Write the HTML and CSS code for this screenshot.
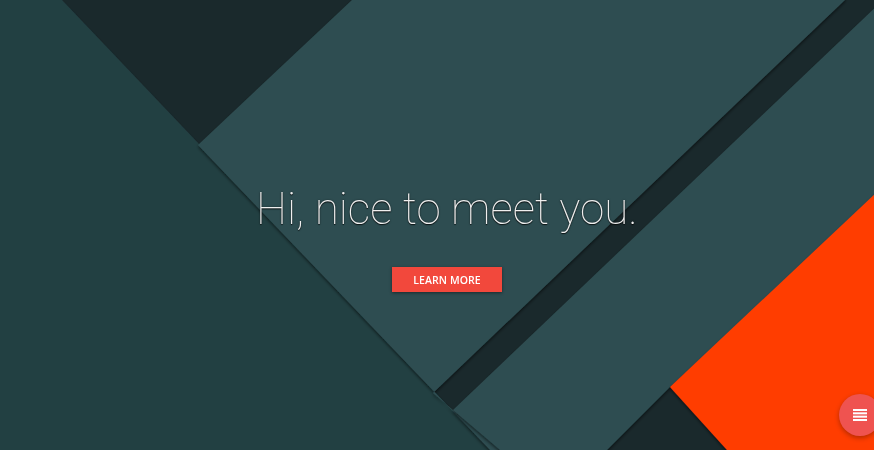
FILE: index.html
```html
<!DOCTYPE html>
<html lang="en">
<head>
<meta charset="utf-8">
<title>Hi, nice to meet you.</title>
<link rel="stylesheet" href="styles.css">
</head>
<body>
<section class="hero">
  <svg class="hero-bg" viewBox="0 0 874 450" preserveAspectRatio="none" aria-hidden="true">
    <defs>
      <filter id="sh" x="-20%" y="-20%" width="140%" height="140%">
        <feDropShadow dx="0" dy="2" stdDeviation="1.8" flood-color="#000" flood-opacity="0.5"/>
      </filter>
    </defs>
    <rect x="0" y="0" width="874" height="450" fill="#1a292c"/>
    <polygon filter="url(#sh)" fill="#243f43" points="-20,-20 62,0 490,450 -20,470"/>
    <polygon filter="url(#sh)" fill="#2f4d51" points="198,145 352,0 352,-20 845,-20 845,0 433,393 453,410 500,450 490,450"/>
    <polygon filter="url(#sh)" fill="#2f4d51" points="883,-20 883,0 453,410 500,450 500,470 607,470 607,450 670,387 894,180 894,-20"/>
    <polygon filter="url(#sh)" fill="#ff3d00" points="894,176 670,387 727,450 737,470 894,470"/>
  </svg>

  <div class="hero-content">
    <h1 class="hero-title">Hi, nice to meet you.</h1>
    <a class="btn" href="#">LEARN MORE</a>
  </div>

  <button class="fab" type="button" aria-label="Menu">
    <svg width="14" height="12" viewBox="0 0 14 12" aria-hidden="true">
      <rect x="0" y="0" width="14" height="2" fill="#fff"/>
      <rect x="0" y="3.33" width="14" height="2" fill="#fff"/>
      <rect x="0" y="6.66" width="14" height="2" fill="#fff"/>
      <rect x="0" y="10" width="14" height="2" fill="#fff"/>
    </svg>
  </button>
</section>
</body>
</html>
```

FILE: styles.css
```css
html, body {
  margin: 0;
  padding: 0;
  background: #1a292c;
}

body {
  font-family: Roboto, "Liberation Sans", sans-serif;
  overflow: hidden;
  -webkit-font-smoothing: antialiased;
}

.hero {
  position: relative;
  width: 100%;
  height: 450px;
  overflow: hidden;
}

.hero-bg {
  position: absolute;
  inset: 0;
  width: 100%;
  height: 100%;
  display: block;
}

.hero-content {
  position: relative;
  display: flex;
  flex-direction: column;
  align-items: center;
  padding-top: 183px;
  padding-left: 20px;
}

.hero-title {
  margin: 0;
  font-family: Roboto, "Liberation Sans", sans-serif;
  font-weight: 100;
  font-size: 44px;
  line-height: 52px;
  color: #efefef;
  text-shadow: 0 1px 1px rgba(0, 0, 0, 0.75), 0 0 2px rgba(0, 0, 0, 0.5);
  transform: translateZ(0);
  will-change: transform;
}

.btn {
  margin-top: 32px;
  display: flex;
  align-items: center;
  justify-content: center;
  width: 110px;
  height: 25px;
  background: #f2483c;
  color: #fff;
  font-family: "Open Sans", "Liberation Sans", sans-serif;
  font-size: 10.5px;
  font-weight: 600;
  letter-spacing: 0.1px;
  text-decoration: none;
  box-shadow: 0 1px 3px rgba(0, 0, 0, 0.45);
  transform: translateZ(0);
}

.fab {
  position: absolute;
  left: 839px;
  top: 394px;
  width: 42px;
  height: 42px;
  border: 0;
  padding: 0;
  border-radius: 50%;
  background: #ef5350;
  display: flex;
  align-items: center;
  justify-content: center;
  box-shadow: 0 2px 5px rgba(0, 0, 0, 0.3);
}
```
